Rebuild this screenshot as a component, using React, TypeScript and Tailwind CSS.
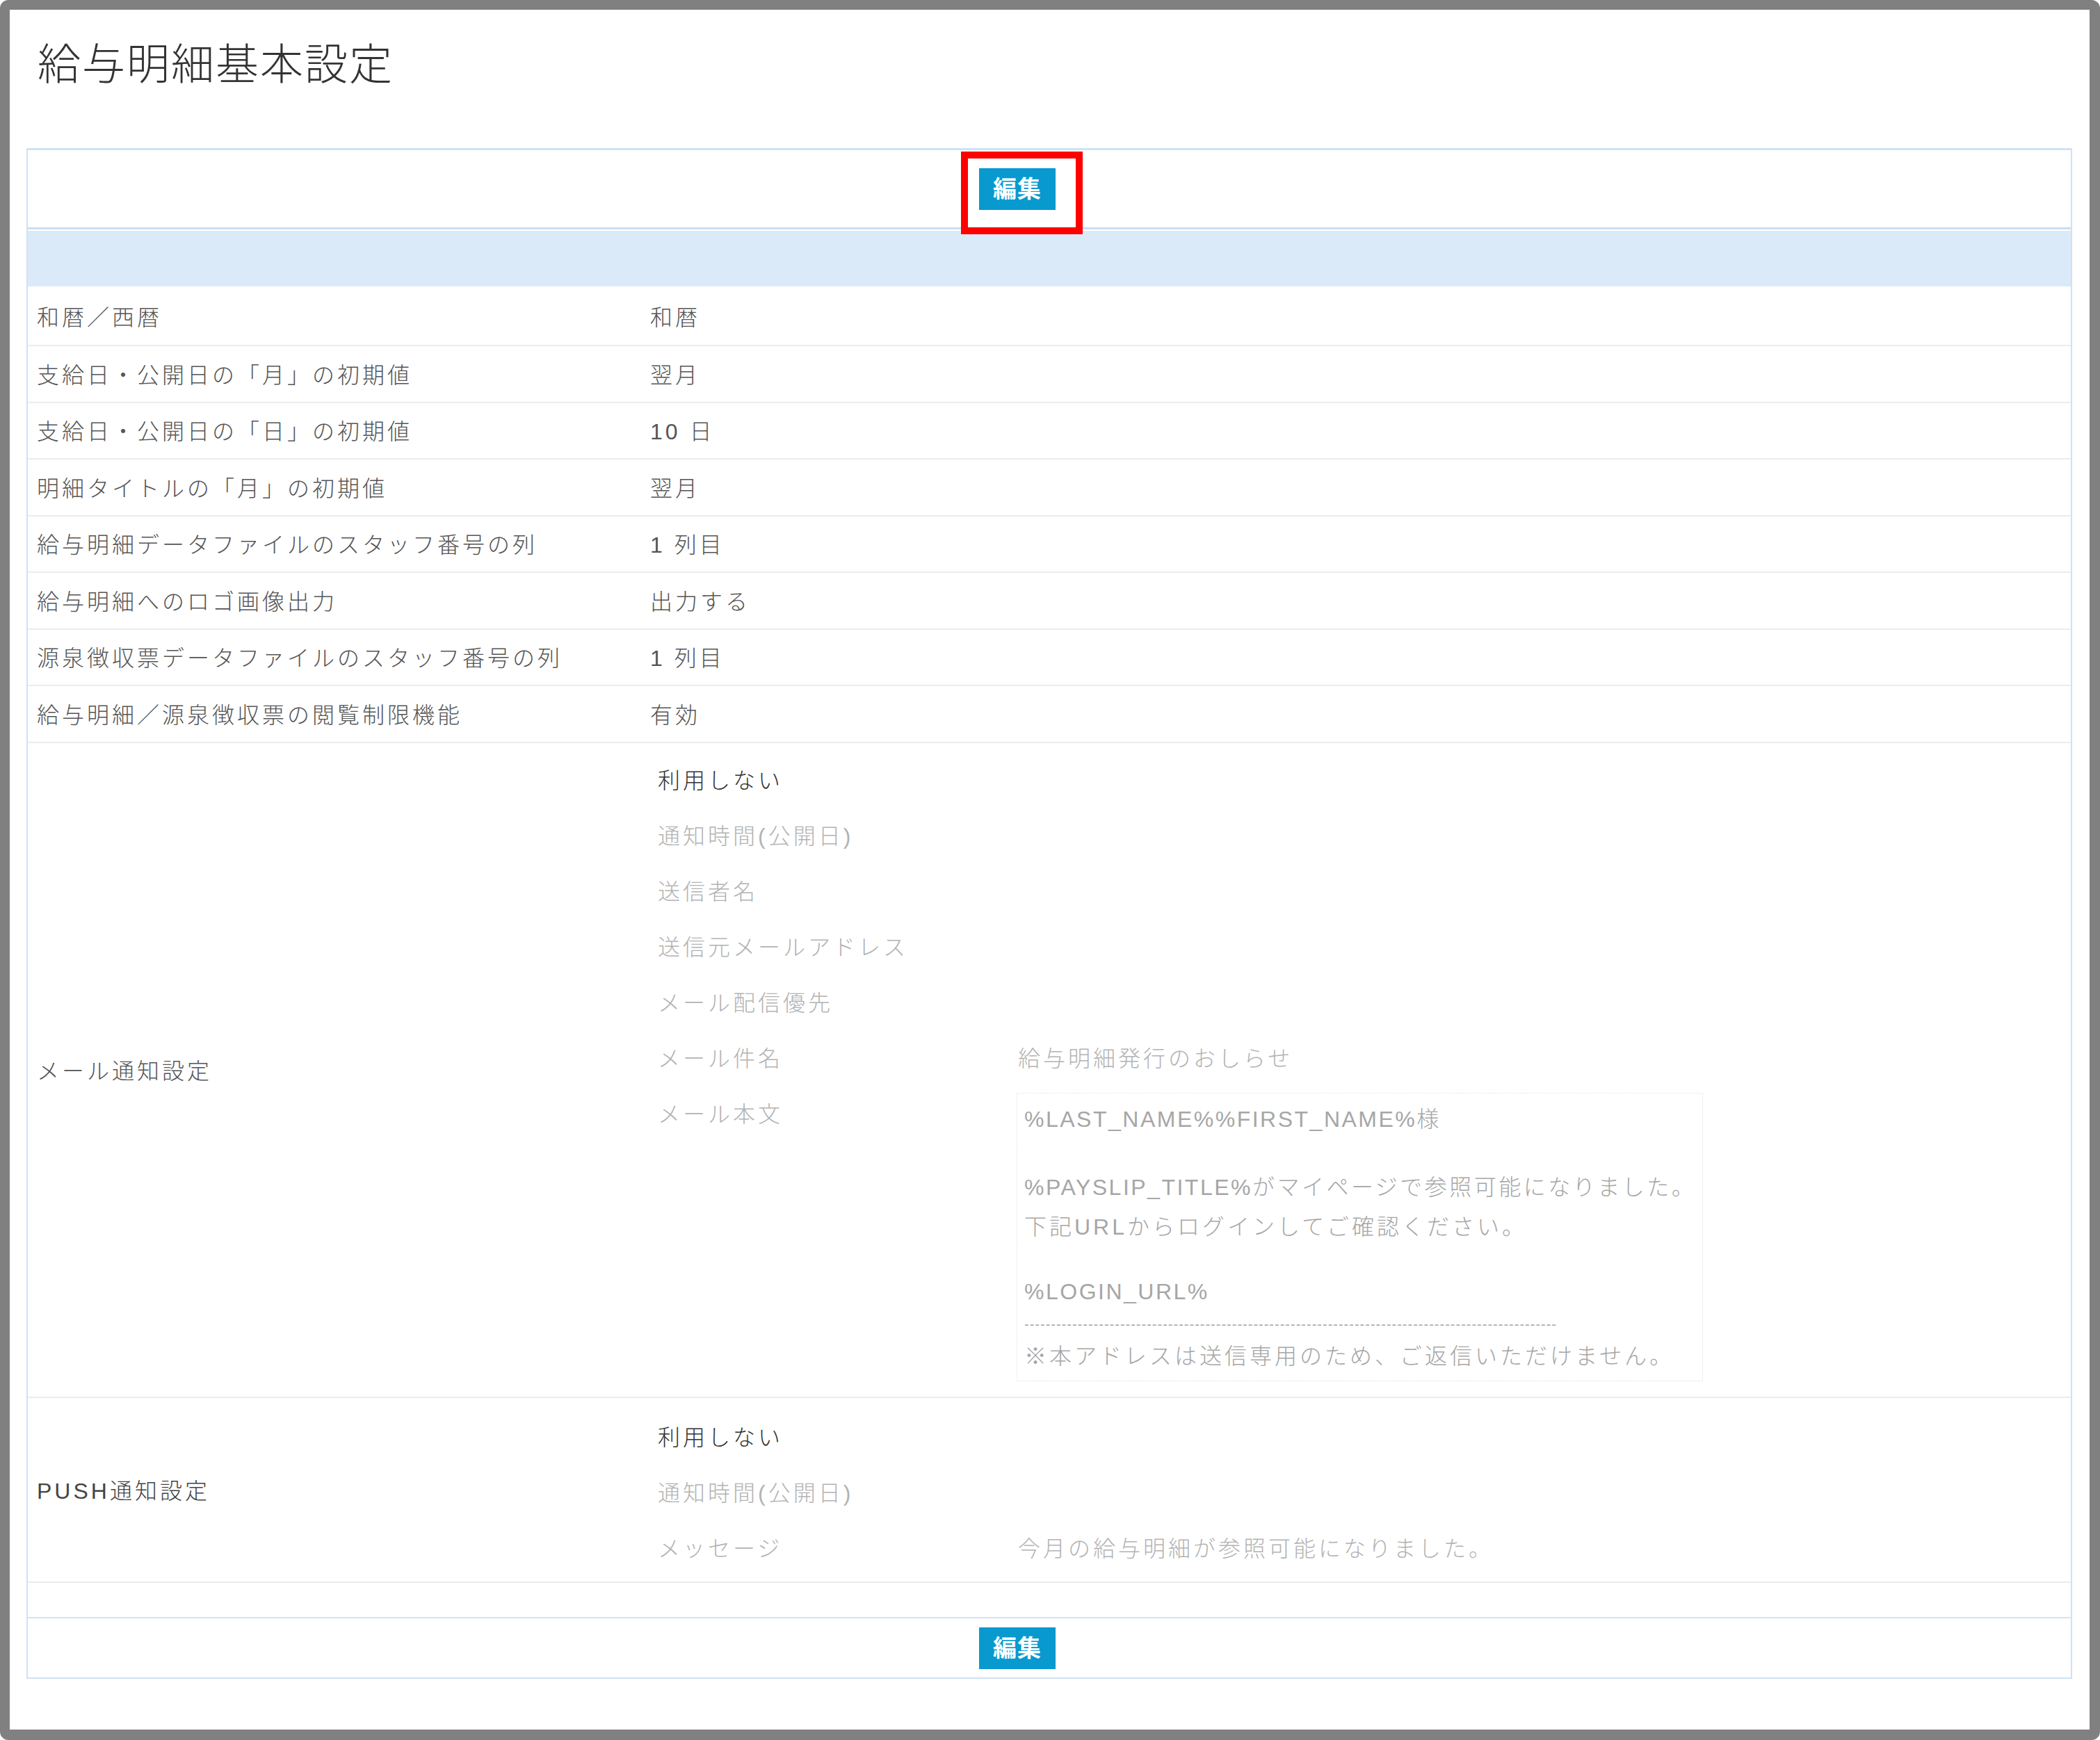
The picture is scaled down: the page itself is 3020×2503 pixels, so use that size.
const font = {
  fontFamily: '"Liberation Sans", "Noto Sans CJK JP", sans-serif',
};

const rows: [string, string][] = [
  ["和暦／西暦", "和暦"],
  ["支給日・公開日の「月」の初期値", "翌月"],
  ["支給日・公開日の「日」の初期値", "10 日"],
  ["明細タイトルの「月」の初期値", "翌月"],
  ["給与明細データファイルのスタッフ番号の列", "1 列目"],
  ["給与明細へのロゴ画像出力", "出力する"],
  ["源泉徴収票データファイルのスタッフ番号の列", "1 列目"],
  ["給与明細／源泉徴収票の閲覧制限機能", "有効"],
];

const mailItems: [string, string][] = [
  ["通知時間(公開日)", ""],
  ["送信者名", ""],
  ["送信元メールアドレス", ""],
  ["メール配信優先", ""],
  ["メール件名", "給与明細発行のおしらせ"],
];

const EditButton = () => (
  <button className="h-[60px] w-[110px] bg-[#0899cf] text-white text-[34px] font-bold leading-none tracking-[1px]">
    編集
  </button>
);

const SubRow = ({ label, value }: { label: string; value: string }) => (
  <div className="grid grid-cols-[518px_1fr] h-[80px] items-center pt-[4px]">
    <div className="text-[#b3b3b3]">{label}</div>
    <div className="text-[#b3b3b3]">{value}</div>
  </div>
);

export default function App() {
  return (
    <div
      className="relative w-[3020px] h-[2503px] bg-white text-[32px] tracking-[4px]"
      style={font}
    >
      <div className="h-full border-[14px] border-r-[15px] border-b-[15px] border-[#808080] rounded-[12px] bg-white pl-[24px] pr-[25px]">
        <h1 className="pt-[49px] pl-[16px] h-[199px] text-[62px] leading-[62px] tracking-[2px] font-light text-[#333]">
          給与明細基本設定
        </h1>

        <div className="border-2 border-t-[3px] border-[#cfe2f6]">
          <div className="flex justify-center pr-[92px] h-[114px] items-center border-b-[3px] border-[#c8ddf4]">
            <EditButton />
          </div>
          <div className="h-[82px] bg-[#dbeaf8] border-t-2 border-white" />

          {rows.map(([label, value], i) => (
            <div
              key={label}
              className={`grid grid-cols-[882px_1fr] items-center border-b-2 border-[#ececec] font-light text-[#555] ${
                i === 0 ? "h-[86px] pt-[6px]" : "h-[81.5px] pt-[4px]"
              }`}
            >
              <div className="px-[13px]">{label}</div>
              <div className="px-[13px]">{value}</div>
            </div>
          ))}

          <div className="grid grid-cols-[882px_1fr] items-center border-b-2 border-[#ececec] font-light">
            <div className="px-[13px] pt-[4px] text-[#555]">メール通知設定</div>
            <div className="pl-[24px] pt-[12px] pb-[22px]">
              <div className="h-[80px] flex items-center pt-[4px] text-[#333]">利用しない</div>
              {mailItems.map(([l, v]) => (
                <SubRow key={l} label={l} value={v} />
              ))}
              <div className="grid grid-cols-[516px_1fr]">
                <div className="pt-[18px] leading-[48px] text-[#b3b3b3]">メール本文</div>
                <div className="mt-[11px] w-[987px] border border-dotted border-[#e2e2e2] pl-[10px] pt-[13px] pb-[10px] leading-[49px] text-[#a6a6a6] whitespace-nowrap">
                  <div className="tracking-[2.5px]">%LAST_NAME%%FIRST_NAME%様</div>
                  <div className="h-[49px]" />
                  <div className="tracking-[3.5px]">
                    <span className="tracking-[2.5px]">%PAYSLIP_TITLE%</span>がマイページで参照可能になりました。
                  </div>
                  <div className="mt-[8px]">下記URLからログインしてご確認ください。</div>
                  <div className="h-[44px]" />
                  <div className="tracking-[2.5px]">%LOGIN_URL%</div>
                  <div className="h-[44px] flex items-center text-[20px] leading-none tracking-[1px] overflow-hidden">
                    {"-".repeat(100)}
                  </div>
                  <div>※本アドレスは送信専用のため、ご返信いただけません。</div>
                </div>
              </div>
            </div>
          </div>

          <div className="grid grid-cols-[882px_1fr] items-center border-b-2 border-[#ececec] font-light">
            <div className="px-[13px] pt-[4px] text-[#444]">PUSH通知設定</div>
            <div className="pl-[24px] pt-[15px] pb-[9px]">
              <div className="h-[80px] flex items-center pt-[4px] text-[#333]">利用しない</div>
              <SubRow label="通知時間(公開日)" value="" />
              <SubRow label="メッセージ" value="今月の給与明細が参照可能になりました。" />
            </div>
          </div>

          <div className="h-[49px]" />

          <div className="flex justify-center pr-[92px] h-[87px] pt-[13px] border-t-2 border-[#cfe2f6]">
            <EditButton />
          </div>
        </div>
      </div>

      <div className="absolute left-[1382px] top-[218px] w-[175px] h-[119px] border-[10px] border-[#ff0000]" />
    </div>
  );
}
